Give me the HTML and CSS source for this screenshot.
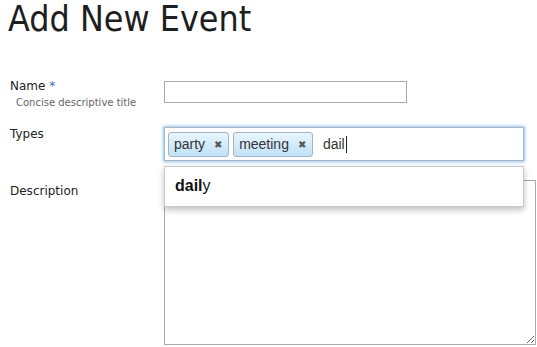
FILE: index.html
```html
<!DOCTYPE html>
<html lang="en">
  <head>
    <meta charset="UTF-8" />
    <meta name="viewport" content="width=device-width, initial-scale=1.0" />
    <link rel="stylesheet" href="styles.css">
  </head>
  <body>
    <div class="container">
      <h1>Add New Event</h1>
      <form class="event-form">
        <div class="row row-name">
          <label class="label">
            Name <span class="required">*</span>
            <span class="hint">Concise descriptive title</span>
          </label>
          <div class="control">
            <input class="text-input" type="text" />
          </div>
        </div>
        <div class="row row-types">
          <label class="label">Types</label>
          <div class="control">
            <div class="tag-box">
              <span class="tag">party <span class="tag-remove">&#10006;</span></span>
              <span class="tag">meeting <span class="tag-remove">&#10006;</span></span>
              <span class="tag-input">dail<span class="caret"></span></span>
            </div>
            <ul class="suggestions">
              <li><b>dail</b>y</li>
            </ul>
          </div>
        </div>
        <div class="row row-description">
          <label class="label">Description</label>
          <div class="control">
            <textarea class="text-area"></textarea>
          </div>
        </div>
      </form>
    </div>
  </body>
</html>
```
FILE: styles.css
```css
* {
  margin: 0;
  padding: 0;
  box-sizing: border-box;
}
body {
  background: #fff;
  color: #222;
  font-family: "DejaVu Sans", Verdana, sans-serif;
  overflow: hidden;
}
.container {
  padding: 0 8px;
}
h1 {
  font-family: "DejaVu Sans Condensed", "DejaVu Sans", sans-serif;
  font-size: 35.5px;
  font-weight: normal;
  line-height: 38px;
  color: #1e1e1e;
}
.event-form {
  padding-left: 2px;
}
.row {
  display: grid;
  grid-template-columns: 154px 1fr;
}
.label {
  font-size: 12px;
  line-height: 14px;
  color: #222;
}
.required {
  color: #3b6fb6;
}
.hint {
  display: block;
  margin-top: 3px;
  padding-left: 6px;
  font-size: 10px;
  color: #666;
}
.row-name {
  margin-top: 43px;
}
.row-name .label {
  margin-top: -2px;
}
.text-input {
  display: block;
  width: 243px;
  height: 22px;
  border: 1px solid #a9a9a9;
  background: #fff;
}
.row-types {
  margin-top: 17px;
}
.row-types .label {
  margin-top: 0;
}
.control {
  position: relative;
}
.tag-box {
  width: 360px;
  height: 34px;
  border: 1px solid #a9b7c3;
  box-shadow: 0 0 3px 1px #8cc4f5;
  display: flex;
  align-items: center;
  gap: 4px;
  padding: 0 3px;
  font-family: "Liberation Sans", Arial, sans-serif;
  font-size: 14px;
  color: #333;
}
.tag {
  display: inline-flex;
  align-items: center;
  height: 25px;
  padding: 0 6px 0 5px;
  border: 1px solid #a3b4c4;
  border-radius: 3px;
  background: linear-gradient(#e9f5fd, #bfe2f7);
}
.tag-remove {
  margin-left: 9px;
  font-size: 10px;
  color: #555;
}
.tag-input {
  margin-left: 6px;
  display: inline-flex;
  align-items: center;
}
.caret {
  display: inline-block;
  width: 1px;
  height: 17px;
  margin-left: 1px;
  background: #222;
}
.suggestions {
  position: absolute;
  top: 39px;
  left: 0;
  width: 360px;
  height: 41px;
  list-style: none;
  background: #fff;
  border: 1px solid #c8c8c8;
  box-shadow: 0 3px 6px rgba(0, 0, 0, 0.25);
  z-index: 2;
  font-family: "Liberation Sans", Arial, sans-serif;
  font-size: 16px;
  color: #111;
}
.suggestions li {
  padding: 9px 10px;
  line-height: 20px;
}
.row-description {
  margin-top: 19px;
}
.row-description .label {
  margin-top: 4px;
}
.text-area {
  display: block;
  width: 372px;
  height: 165px;
  border: 1px solid #a9a9a9;
  background: #fff;
  resize: both;
}
```
